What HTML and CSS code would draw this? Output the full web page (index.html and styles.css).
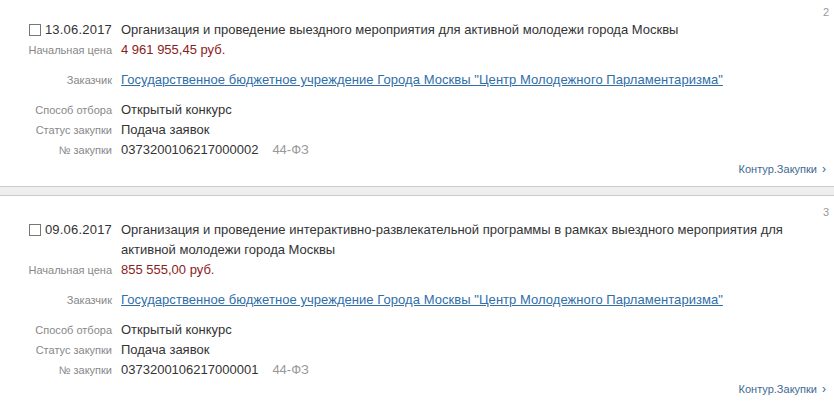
FILE: index.html
```html
<!DOCTYPE html>
<html>
<head>
   <meta charset="utf-8">
   <meta name="viewport" content="width=device-width, initial-scale=1">
   <title>Закупки</title>
   <link rel="stylesheet" href="styles.css">
</head>
<body>
   <div class="list">
      <div class="card">
         <div class="num">2</div>
         <div class="grid">
            <div class="label date"><span class="check"></span>13.06.2017</div>
            <div class="value title">Организация и проведение выездного мероприятия для активной молодежи города Москвы</div>

            <div class="label">Начальная цена</div>
            <div class="value price">4 961 955,45 руб.</div>

            <div class="label gap">Заказчик</div>
            <div class="value gap"><a href="#" class="customer">Государственное бюджетное учреждение Города Москвы "Центр Молодежного Парламентаризма"</a></div>

            <div class="label gap">Способ отбора</div>
            <div class="value gap">Открытый конкурс</div>

            <div class="label">Статус закупки</div>
            <div class="value">Подача заявок</div>

            <div class="label">№ закупки</div>
            <div class="value">0373200106217000002<span class="law">44-ФЗ</span></div>
         </div>
         <div class="source"><a href="#">Контур.Закупки</a><span class="arrow">›</span></div>
      </div>

      <div class="sep"></div>

      <div class="card">
         <div class="num">3</div>
         <div class="grid">
            <div class="label date"><span class="check"></span>09.06.2017</div>
            <div class="value title">Организация и проведение интерактивно-развлекательной программы в рамках выездного мероприятия для активной молодежи города Москвы</div>

            <div class="label">Начальная цена</div>
            <div class="value price">855 555,00 руб.</div>

            <div class="label gap">Заказчик</div>
            <div class="value gap"><a href="#" class="customer">Государственное бюджетное учреждение Города Москвы "Центр Молодежного Парламентаризма"</a></div>

            <div class="label gap">Способ отбора</div>
            <div class="value gap">Открытый конкурс</div>

            <div class="label">Статус закупки</div>
            <div class="value">Подача заявок</div>

            <div class="label">№ закупки</div>
            <div class="value">0373200106217000001<span class="law">44-ФЗ</span></div>
         </div>
         <div class="source"><a href="#">Контур.Закупки</a><span class="arrow">›</span></div>
      </div>
   </div>
</body>
</html>
```

FILE: styles.css
```css
body{
   margin: 0;
   background: #fff;
   font-family: "Liberation Sans", Arial, sans-serif;
   color: #333;
   font-size: 13px;
}

.list{
   margin-top: -4px;
}

.card{
   padding: 8px 5px 8px 0;
}

.num{
   text-align: right;
   font-size: 11px;
   line-height: 16px;
   color: #999;
}

.grid{
   display: grid;
   grid-template-columns: 112px 1fr;
   column-gap: 9px;
   padding-right: 19px;
}

.label{
   text-align: right;
   font-size: 11px;
   line-height: 20px;
   color: #888;
}

.value{
   line-height: 20px;
}

.gap{
   margin-top: 10px;
}

.date{
   font-size: 13px;
   color: #333;
   display: flex;
   justify-content: flex-end;
   align-items: center;
   height: 20px;
   letter-spacing: 0.2px;
}

.check{
   width: 10px;
   height: 10px;
   border: 1px solid #777;
   margin-right: 4px;
   background: #fff;
}

.price{
   color: #8b1c1c;
}

a.customer{
   color: #2f6ea8;
   text-decoration: underline;
   letter-spacing: 0.05px;
}

.law{
   color: #999;
   margin-left: 14px;
}

.source{
   text-align: right;
   font-size: 11px;
   line-height: 18px;
   padding-right: 3px;
}

.source a{
   color: #3d6a93;
   text-decoration: none;
}

.arrow{
   color: #3d6a93;
   margin-left: 5px;
   font-size: 12px;
}

.sep{
   height: 8px;
   background: #eee;
   border-top: 1px solid #ccc;
   border-bottom: 1px solid #ccc;
}
```
